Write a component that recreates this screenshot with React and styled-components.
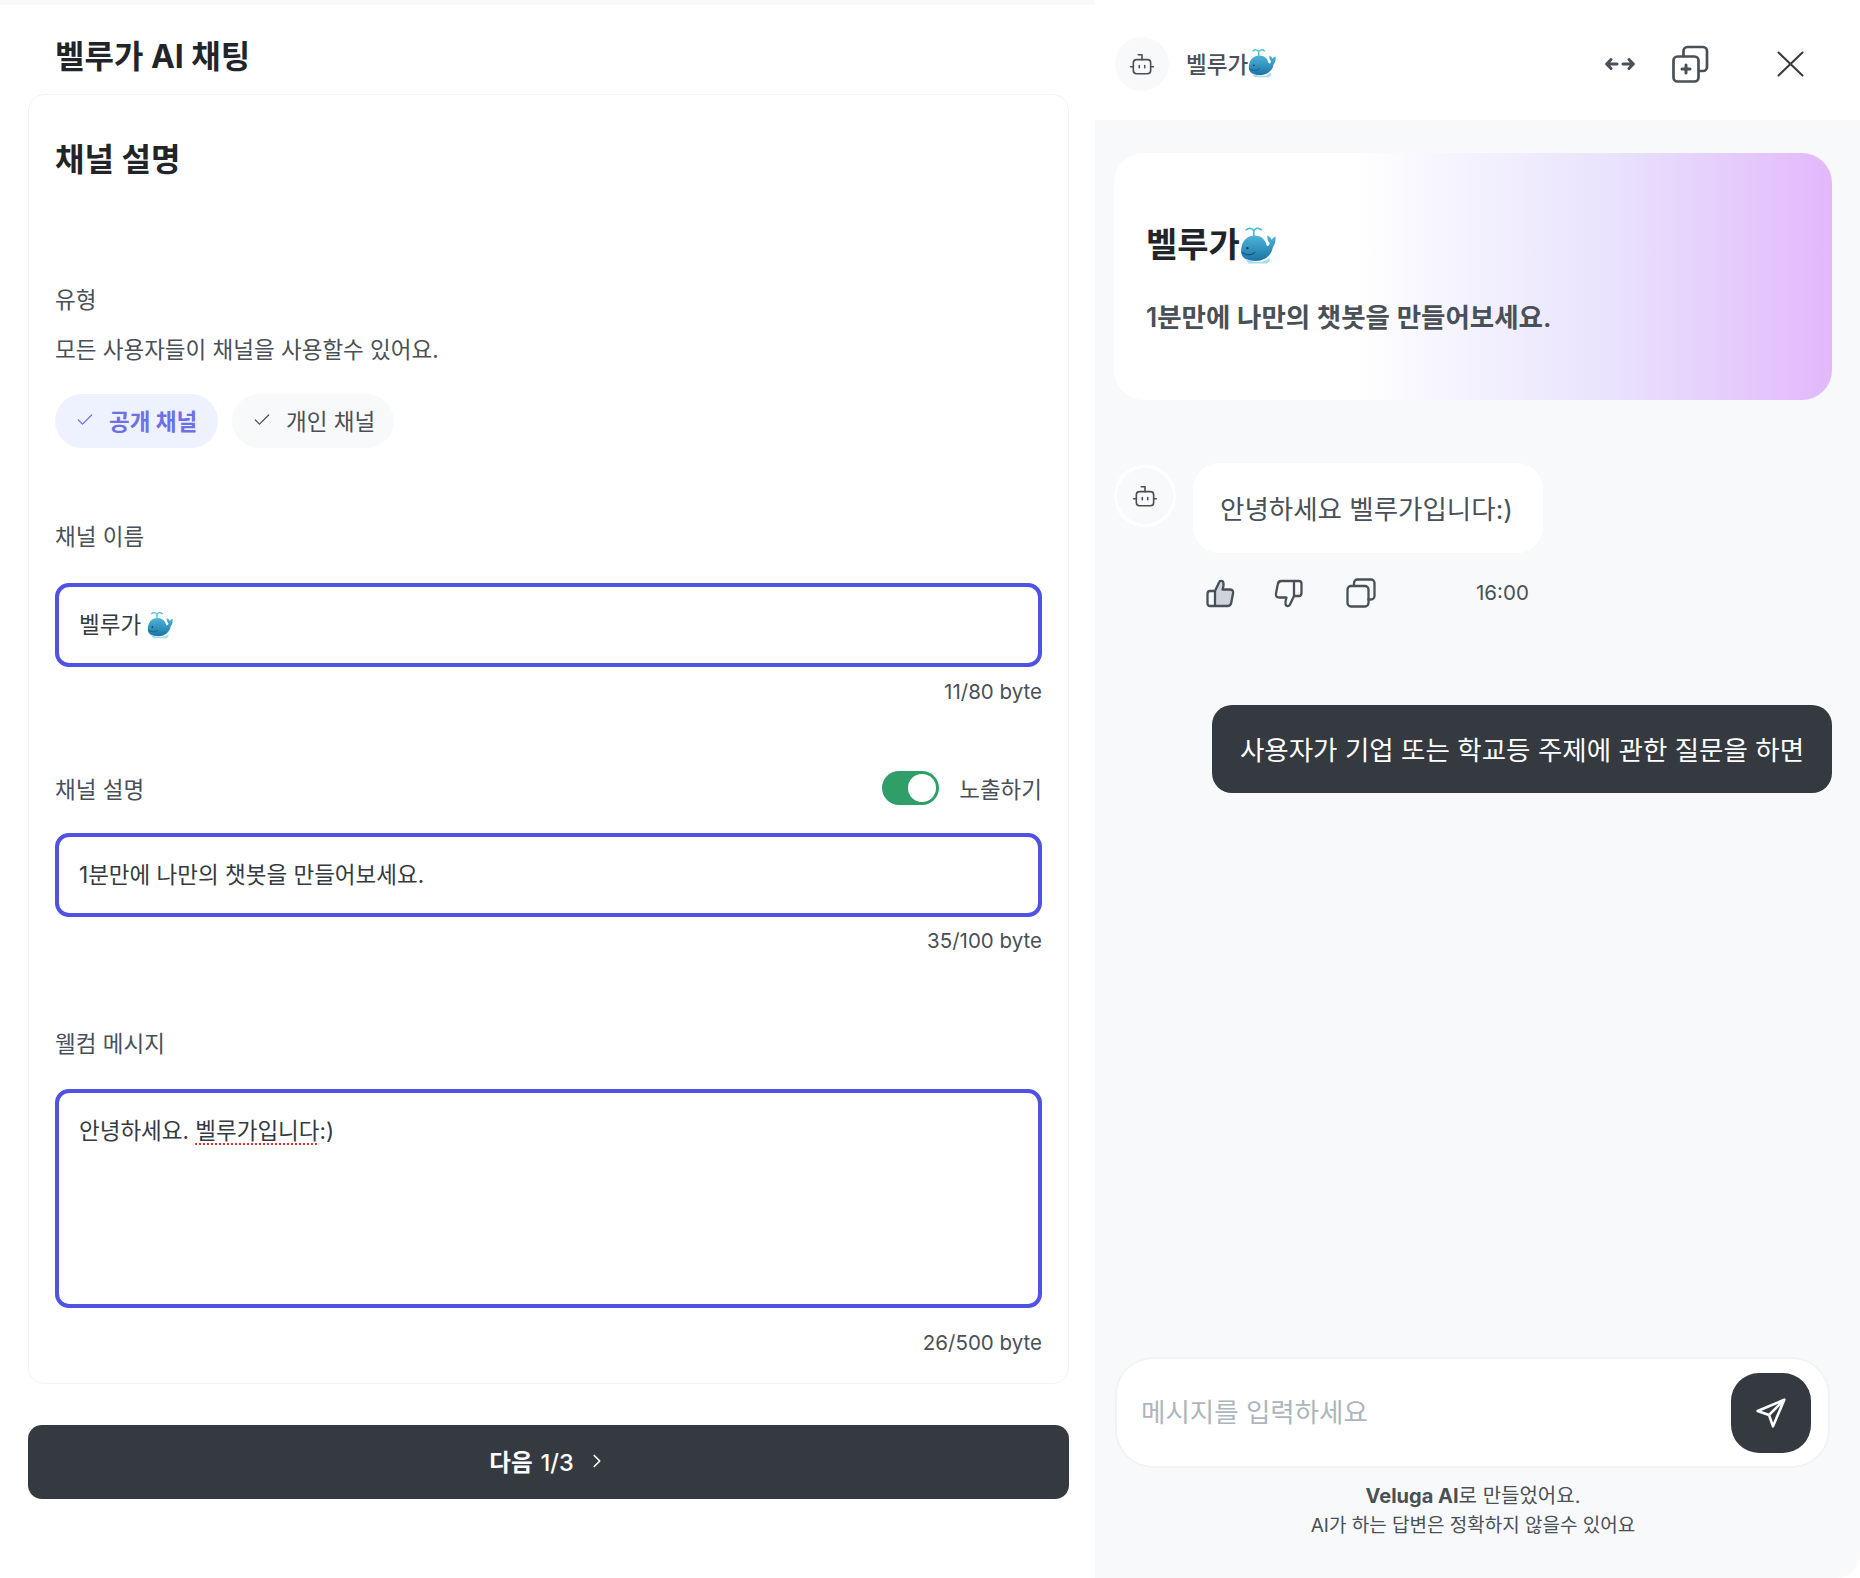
import React from 'react'
import styled, { createGlobalStyle } from 'styled-components'
import { Check, ChevronRight } from 'lucide-react'

const GlobalStyle = createGlobalStyle`
  html, body { margin: 0; padding: 0; background: #fff; }
  * { box-sizing: border-box; }
  body {
    font-family: Inter, "Noto Sans CJK KR", "Noto Sans", sans-serif;
    color: #495057;
  }
`

/**** Layout ****/
const Page = styled.div`
  width: 1860px;
  height: 1578px;
  display: grid;
  grid-template-columns: 1095px 765px;
  overflow: hidden;
`
const Left = styled.section`
  border-top: 5px solid #f8f9fa;
  padding: 32px 26px 0 28px;
`
const PageTitle = styled.h1`
  margin: 0 0 17px 27px;
  font-size: 32px;
  line-height: 40px;
  font-weight: 700;
  color: #212529;
`
const Card = styled.div`
  height: 1290px;
  border: 1px solid #f1f3f5;
  border-radius: 16px;
  padding: 45px 26px 0;
`
const SectionTitle = styled.h2`
  margin: 0;
  font-size: 32px;
  line-height: 40px;
  font-weight: 700;
  color: #212529;
`
const Label = styled.div`
  margin-top: ${p => p.$top}px;
  font-size: 22.5px;
  line-height: 30px;
  color: #495057;
`
const PillRow = styled.div`
  display: flex;
  gap: 14px;
  margin-top: 29px;
`
const Pill = styled.div`
  height: 54px;
  width: ${p => p.$active ? 163 : 162}px;
  border-radius: 27px;
  display: flex;
  align-items: center;
  gap: 14px;
  padding: 0 0 2px 20px;
  font-size: 22.5px;
  font-weight: ${p => p.$active ? 700 : 400};
  color: ${p => p.$active ? '#6c70e6' : '#495057'};
  background: ${p => p.$active ? '#eef2ff' : '#f8f9fa'};
`
const Box = styled.div`
  margin-top: ${p => p.$top}px;
  height: ${p => p.$height}px;
  border: 4px solid #4f52e2;
  border-radius: 14px;
  padding: ${p => p.$multi ? '23px' : '0'} 20px 0;
  display: flex;
  align-items: ${p => p.$multi ? 'flex-start' : 'center'};
  font-size: 22.5px;
  line-height: 30px;
  color: #343a40;
`
const Spell = styled.span`
  text-decoration: underline dotted #e03131 2px;
  text-underline-offset: 4px;
`
const Hint = styled.div`
  margin-top: ${p => p.$top}px;
  text-align: right;
  font-size: 20.5px;
  line-height: 24px;
  color: #495057;
`
const LabelRow = styled.div`
  margin-top: 67px;
  height: 34px;
  display: flex;
  align-items: center;
  justify-content: space-between;
  font-size: 22.5px;
`
const ToggleWrap = styled.div`
  display: flex;
  align-items: center;
  gap: 20px;
`
const Toggle = styled.div`
  width: 57px;
  height: 34px;
  border-radius: 17px;
  background: #2f9e68;
  display: flex;
  align-items: center;
  justify-content: flex-end;
  padding-right: 3px;
`
const Knob = styled.div`
  width: 28px;
  height: 28px;
  border-radius: 50%;
  background: #fff;
`
const NextButton = styled.button`
  display: flex;
  align-items: center;
  justify-content: center;
  gap: 12px;
  width: 100%;
  height: 74px;
  margin-top: 41px;
  padding: 0 0 2px;
  border: 0;
  border-radius: 14px;
  background: #343a40;
  color: #fff;
  font: inherit;
  font-size: 23.5px;
  font-weight: 600;
`
const Light = styled.span`
  font-weight: 500;
  margin-left: 8px;
`

/**** Right panel ****/
const Right = styled.section`
  display: flex;
  flex-direction: column;
  background: #f8f9fa;
  border-bottom-right-radius: 24px;
`
const Header = styled.header`
  height: 120px;
  flex: none;
  background: #fff;
  display: flex;
  align-items: center;
  padding: 8px 56px 0 20px;
`
const HeaderAvatar = styled.div`
  width: 54px;
  height: 54px;
  border-radius: 50%;
  background: #f8f9fa;
  display: flex;
  align-items: center;
  justify-content: center;
  flex: none;
`
const HeaderName = styled.div`
  display: flex;
  align-items: center;
  margin-left: 17px;
  padding-bottom: 2px;
  font-size: 22.5px;
  font-weight: 500;
  color: #495057;
  flex: 1;
`
const HeaderIcons = styled.div`
  display: flex;
  align-items: center;
`
const IconSlot = styled.span`
  display: flex;
  margin-left: ${p => p.$ml || 0}px;
  width: ${p => p.$w}px;
`
const Body = styled.div`
  flex: 1;
  display: flex;
  flex-direction: column;
  padding: 33px 28px 0 19px;
`
const Hero = styled.div`
  height: 247px;
  border-radius: 30px;
  padding: 70px 32px 0;
  background: linear-gradient(90deg, #fff 33%, #f5f3fe 48%, #e8e2fc 70%, #e2b8fb 100%);
`
const HeroTitle = styled.div`
  display: flex;
  align-items: center;
  height: 44px;
  font-size: 34px;
  line-height: 44px;
  font-weight: 700;
  color: #212529;
`
const HeroText = styled.div`
  margin-top: 32px;
  font-size: 26.5px;
  line-height: 36px;
  font-weight: 600;
  color: #495057;
`
const MessageRow = styled.div`
  display: flex;
  gap: 17px;
  margin-top: 63px;
`
const BotAvatar = styled.div`
  width: 62px;
  height: 62px;
  margin-top: 2px;
  border-radius: 50%;
  border: 3px solid #fff;
  display: flex;
  align-items: center;
  justify-content: center;
  flex: none;
`
const Bubble = styled.div`
  height: 90px;
  border-radius: 26px;
  background: #fff;
  padding: 0 30px 2px 27px;
  display: flex;
  align-items: center;
  font-size: 26.5px;
  color: #495057;
`
const Actions = styled.div`
  display: flex;
  align-items: center;
  height: 36px;
  margin: 22px 0 0 92px;
`
const Time = styled.span`
  font-size: 20.5px;
  padding-bottom: 2px;
  color: #495057;
`
const UserBubble = styled.div`
  align-self: flex-end;
  margin-top: 94px;
  width: 620px;
  height: 88px;
  border-radius: 20px;
  background: #343a40;
  color: #fff;
  font-size: 26.5px;
  display: flex;
  align-items: center;
  justify-content: center;
  padding-bottom: 2px;
  white-space: nowrap;
`
const Composer = styled.div`
  margin: auto 4px 0 3px;
  height: 107px;
  flex: none;
  border-radius: 36px;
  background: #fff;
  box-shadow: 0 0 0 2px #f1f3f5;
  display: flex;
  align-items: center;
  justify-content: space-between;
  padding: 0 17px 0 24px;
`
const Placeholder = styled.span`
  font-size: 26.5px;
  padding-bottom: 5px;
  color: #adb5bd;
`
const SendButton = styled.div`
  width: 80px;
  height: 80px;
  border-radius: 28px;
  background: #343a40;
  display: flex;
  align-items: center;
  justify-content: center;
`
const Footer = styled.footer`
  margin: 16px 0 38px;
  text-align: center;
  font-size: 19px;
  line-height: 29px;
  color: #495057;
  strong { font-weight: 700; }
  div:first-child { font-size: 20px; }
`

/**** Drawings ****/
const Whale = ({ size = 30, id }) => (
  <svg width={size} height={size * 36 / 34} viewBox="0 0 34 36">
    <defs>
      <linearGradient id={id} x1="0" y1="0" x2="0" y2="1">
        <stop offset="0" stopColor="#4fb4d8" />
        <stop offset="1" stopColor="#1a74a6" />
      </linearGradient>
    </defs>
    <path d="M13 9V4.500M13 4.500C11.500 1.800 8.500 1.500 6 3.500M13 4.500C14.500 1.800 17.500 1.500 20 3.500" fill="none" stroke="#4cc0da" strokeWidth="1.700" strokeLinecap="round" />
    <path d="M1 24C1 14 7 9 14 9C20 9 24 13 25 18C26 20 28 18 28 16C26 14 25.500 11 26 9C28 10 29.500 12 30 13C31 11.500 32 10.500 33.500 10C34 14 33 18 31 20C30 27 24 33 15 33C6 33 1 30 1 24Z" fill={`url(#${id})`} />
    <path d="M6 31C12 35 22 35 28 30.500C29 33 27 35.500 24 35.500H9C7 35.500 6 33 6 31Z" fill="#a9dcea" />
    <path d="M2 25C6 28 11 28 14 25" fill="none" stroke="#14557c" strokeWidth="1" strokeLinecap="round" />
    <circle cx="7" cy="21" r="1.100" fill="#0f3a55" />
  </svg>
)

const Bot = ({ size = 26 }) => (
  <svg width={size} height={size} viewBox="0 0 24 24" fill="none" stroke="#495057" strokeWidth="1.500" strokeLinecap="round" strokeLinejoin="round">
    <rect x="4" y="8" width="16" height="13" rx="3" />
    <path d="M12 8V3.500H8.500M9.500 13.500V15.500M14.500 13.500V15.500M1.500 14.500H4M20 14.500H22.500" />
  </svg>
)

const Arrows = () => (
  <svg width="30" height="14" viewBox="0 0 30 14" fill="none" stroke="#495057" strokeWidth="3" strokeLinecap="round" strokeLinejoin="round">
    <path d="M6 2.500L1.700 7L6 11.500M1.700 7H12M24 2.500L28.300 7L24 11.500M28.300 7H18" />
  </svg>
)

const AddCopy = () => (
  <svg width="38" height="38" viewBox="0 0 38 38" fill="none" stroke="#495057" strokeWidth="2.700" strokeLinecap="round" strokeLinejoin="round">
    <rect x="1.500" y="11.500" width="25" height="25" rx="4" />
    <path d="M11.500 11V6A4 4 0 0 1 15.500 2H31A4 4 0 0 1 35 6V22A4 4 0 0 1 31 26H27" />
    <path d="M14 20V28M10 24H18" strokeWidth="3" />
  </svg>
)

const Close = () => (
  <svg width="27" height="26" viewBox="0 0 27 26" fill="none" stroke="#343a40" strokeWidth="2" strokeLinecap="round">
    <path d="M1.500 1.500L25.500 24.500M25.500 1.500L1.500 24.500" />
  </svg>
)

const Thumb = ({ down }) => (
  <svg width="29" height="29" viewBox="0 0 29 29" strokeLinejoin="round" strokeLinecap="round">
    <g transform={down ? 'rotate(180 14.5 14.5)' : undefined}>
      {!down && <path d="M9 12L13 3.500C13.500 1.500 17 1.200 17.500 4C18 6 17 9 16.500 10.500H23.500C26.500 10.500 27.500 12 27 14.500L25.300 23.500C25 25.500 23.500 27 21.500 27H9Z" fill="#ced4da" />}
      <path d="M9 12L13 3.500C13.500 1.500 17 1.200 17.500 4C18 6 17 9 16.500 10.500H23.500C26.500 10.500 27.500 12 27 14.500L25.300 23.500C25 25.500 23.500 27 21.500 27H4C2.500 27 1.500 26 1.500 24.500V15C1.500 13 2.500 12 4 12ZM9 12V27" fill="none" stroke="#495057" strokeWidth="2.300" />
    </g>
  </svg>
)

const Copy = () => (
  <svg width="30" height="30" viewBox="0 0 30 30" fill="none" stroke="#495057" strokeWidth="2.300" strokeLinecap="round" strokeLinejoin="round">
    <rect x="1.500" y="8" width="21" height="20.500" rx="3.500" />
    <path d="M8 8V5A3.500 3.500 0 0 1 11.500 1.500H25A3.500 3.500 0 0 1 28.500 5V18A3.500 3.500 0 0 1 25 21.500H22.500" />
  </svg>
)

const Send = () => (
  <svg width="32" height="32" viewBox="0 0 24 24" fill="none" stroke="#fff" strokeWidth="1.900" strokeLinecap="round" strokeLinejoin="round">
    <path d="M22 2L2 10.500L10.500 13.500L13.500 22ZM10.500 13.500L22 2" />
  </svg>
)

/**** Component ****/
const App = () => {
  return (
    <Page>
      <GlobalStyle />
      <Left>
        <PageTitle>벨루가 AI 채팅</PageTitle>
        <Card>
          <SectionTitle>채널 설명</SectionTitle>
          <Label $top={105}>유형</Label>
          <Label $top={20}>모든 사용자들이 채널을 사용할수 있어요.</Label>
          <PillRow>
            <Pill $active><Check size={20} strokeWidth={1.5} />공개 채널</Pill>
            <Pill><Check size={20} strokeWidth={1.5} />개인 채널</Pill>
          </PillRow>
          <Label $top={74}>채널 이름</Label>
          <Box $top={31} $height={84}>벨루가&nbsp;<Whale size={26} id="whale-a" /></Box>
          <Hint $top={13}>11/80 byte</Hint>
          <LabelRow>
            <span>채널 설명</span>
            <ToggleWrap>
              <Toggle><Knob /></Toggle>
              <span>노출하기</span>
            </ToggleWrap>
          </LabelRow>
          <Box $top={28} $height={84}>1분만에 나만의 챗봇을 만들어보세요.</Box>
          <Hint $top={12}>35/100 byte</Hint>
          <Label $top={76}>웰컴 메시지</Label>
          <Box $top={30} $height={219} $multi>
            <span>안녕하세요. <Spell>벨루가입니다</Spell>:)</span>
          </Box>
          <Hint $top={23}>26/500 byte</Hint>
        </Card>
        <NextButton>
          <span>다음<Light>1/3</Light></span>
          <ChevronRight size={22} strokeWidth={1.8} />
        </NextButton>
      </Left>
      <Right>
        <Header>
          <HeaderAvatar><Bot /></HeaderAvatar>
          <HeaderName>벨루가<Whale size={28} id="whale-b" /></HeaderName>
          <HeaderIcons>
            <Arrows />
            <IconSlot $w={38} $ml={37}><AddCopy /></IconSlot>
            <IconSlot $w={27} $ml={67}><Close /></IconSlot>
          </HeaderIcons>
        </Header>
        <Body>
          <Hero>
            <HeroTitle>벨루가<Whale size={36} id="whale-c" /></HeroTitle>
            <HeroText>1분만에 나만의 챗봇을 만들어보세요.</HeroText>
          </Hero>
          <MessageRow>
            <BotAvatar><Bot /></BotAvatar>
            <Bubble>안녕하세요 벨루가입니다:)</Bubble>
          </MessageRow>
          <Actions>
            <IconSlot $w={68}><Thumb /></IconSlot>
            <IconSlot $w={72}><Thumb down /></IconSlot>
            <IconSlot $w={130}><Copy /></IconSlot>
            <Time>16:00</Time>
          </Actions>
          <UserBubble>사용자가 기업 또는 학교등 주제에 관한 질문을 하면</UserBubble>
          <Composer>
            <Placeholder>메시지를 입력하세요</Placeholder>
            <SendButton><Send /></SendButton>
          </Composer>
          <Footer>
            <div><strong>Veluga AI</strong>로 만들었어요.</div>
            <div>AI가 하는 답변은 정확하지 않을수 있어요</div>
          </Footer>
        </Body>
      </Right>
    </Page>
  )
}

export default App
